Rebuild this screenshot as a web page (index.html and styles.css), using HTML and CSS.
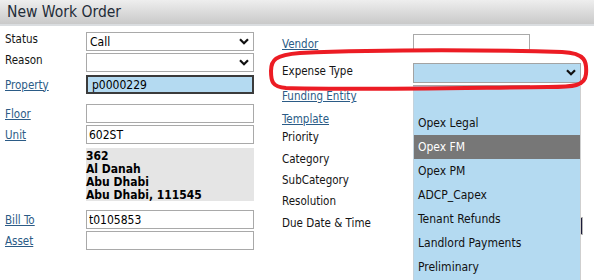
FILE: index.html
```html
<!DOCTYPE html>
<html lang="en">

<head>
    <meta charset="UTF-8" />
    <title>New Work Order</title>
    <link rel="stylesheet" href="styles.css">
</head>

<body>
    <div class="title-bar">
        <h1>New Work Order</h1>
    </div>

    <div class="form">
        <div class="col col-left">
            <div class="row r-status">
                <span class="lbl">Status</span>
                <div class="sel">
                    <select><option>Call</option></select>
                    <svg class="chev" viewBox="0 0 10 7"><path d="M1 1.2 L5 5.2 L9 1.2" /></svg>
                </div>
            </div>
            <div class="row r-reason">
                <span class="lbl">Reason</span>
                <div class="sel">
                    <select><option></option></select>
                    <svg class="chev" viewBox="0 0 10 7"><path d="M1 1.2 L5 5.2 L9 1.2" /></svg>
                </div>
            </div>
            <div class="row r-property">
                <a class="lbl link" href="#">Property</a>
                <input class="fld fld-focus" type="text" value="p0000229" />
            </div>
            <div class="row r-floor">
                <a class="lbl link" href="#">Floor</a>
                <input class="fld" type="text" value="" />
            </div>
            <div class="row r-unit">
                <a class="lbl link" href="#">Unit</a>
                <input class="fld" type="text" value="602ST" />
            </div>
            <div class="row r-address">
                <span class="lbl"></span>
                <div class="address">
                    362<br>Al Danah<br>Abu Dhabi<br>Abu Dhabi, 111545
                </div>
            </div>
            <div class="row r-bill">
                <a class="lbl link" href="#">Bill To</a>
                <input class="fld" type="text" value="t0105853" />
            </div>
            <div class="row r-asset">
                <a class="lbl link" href="#">Asset</a>
                <input class="fld" type="text" value="" />
            </div>
        </div>

        <div class="col col-right">
            <div class="rrow r-vendor">
                <a class="lbl link" href="#">Vendor</a>
                <input class="fld fld-short" type="text" value="" />
            </div>
            <div class="rrow r-expense">
                <span class="lbl">Expense Type</span>
                <div class="sel sel-open">
                    <select><option></option></select>
                    <svg class="chev" viewBox="0 0 10 7"><path d="M1 1.2 L5 5.2 L9 1.2" /></svg>
                    <ul class="dropdown">
                        <li class="blank"></li>
                        <li>Opex Legal</li>
                        <li class="active">Opex FM</li>
                        <li>Opex PM</li>
                        <li>ADCP_Capex</li>
                        <li>Tenant Refunds</li>
                        <li>Landlord Payments</li>
                        <li>Preliminary</li>
                    </ul>
                </div>
            </div>
            <div class="rrow r-funding">
                <a class="lbl link" href="#">Funding Entity</a>
                <input class="fld fld-short" type="text" value="" />
            </div>
            <div class="rrow r-template">
                <a class="lbl link" href="#">Template</a>
            </div>
            <div class="rrow r-priority">
                <span class="lbl">Priority</span>
            </div>
            <div class="rrow">
                <span class="lbl">Category</span>
            </div>
            <div class="rrow">
                <span class="lbl">SubCategory</span>
            </div>
            <div class="rrow">
                <span class="lbl">Resolution</span>
            </div>
            <div class="rrow r-due">
                <span class="lbl">Due Date &amp; Time</span>
                <div class="due-fld"></div>
            </div>
        </div>
    </div>

    <!-- hand drawn highlight around the expense type row -->
    <svg class="ring" width="594" height="280" viewBox="0 0 594 280">
        <path d="M300 53 C 390 49, 500 50, 562 52 C 586 53, 587 62, 586 74 C 585 86, 574 87, 548 87
                 C 450 88, 340 90, 286 88 C 272 87, 271 81, 271 71 C 271 60, 275 55, 300 53" />
    </svg>
</body>

</html>
```

FILE: styles.css
```css
:root {
    --link-color: #2b5b86;
    --text-color: #141414;
    --field-border: #a9a9a9;
    --pick-bg: #b4daf1;
    --font: "DejaVu Sans Condensed", "DejaVu Sans", sans-serif;
}

* {
    box-sizing: border-box;
}

html,
body {
    height: 100%;
}

body {
    position: relative;
    margin: 0;
    padding: 0;
    min-height: 280px;
    font-family: var(--font);
    font-size: 11.5px;
    color: var(--text-color);
    background: #fff;
    overflow: hidden;
}

.title-bar {
    height: 26px;
    background: linear-gradient(#eeeeee, #c9c9c9);
    border-bottom: 2px solid #dadde0;
}

.title-bar h1 {
    margin: 0;
    padding-left: 7px;
    font-size: 15.5px;
    font-weight: normal;
    line-height: 24px;
    color: #1f2c38;
}

.form {
    display: flex;
    gap: 28px;
    padding-left: 5px;
}

.col-left {
    display: flex;
    flex-direction: column;
    width: 249px;
    padding-top: 6px;
}

.col-right {
    display: flex;
    flex-direction: column;
    padding-top: 8px;
}

.row {
    display: flex;
    align-items: center;
}

.lbl {
    flex: 0 0 auto;
    color: var(--text-color);
}

.row .lbl {
    width: 81px;
}

.rrow {
    display: flex;
    align-items: flex-start;
    height: 21px;
}

.rrow .lbl {
    width: 131px;
    padding-top: 2px;
}

.link {
    color: var(--link-color);
    text-decoration: underline;
}

/* left column spacing */
.r-status .lbl,
.r-reason .lbl {
    align-self: flex-start;
    padding-top: 0;
}

.r-reason { margin-top: 2px; }
.r-property { margin-top: 3px; }
.r-floor { margin-top: 10px; }
.r-unit { margin-top: 2px; }
.r-address { margin-top: 4px; align-items: flex-start; }
.r-bill { margin-top: 9px; }
.r-asset { margin-top: 2px; }

/* fields */
.fld {
    width: 168px;
    height: 19px;
    margin: 0;
    padding: 0 2px;
    font-family: var(--font);
    font-size: 12px;
    color: #000;
    background: #fff;
    border: 1px solid var(--field-border);
    border-radius: 0;
    outline: none;
}

.fld-focus {
    background: var(--pick-bg);
    border: 2px solid #3b3b3b;
    padding-left: 4px;
}

.fld-short {
    width: 117px;
    height: 17px;
}

.sel {
    position: relative;
    width: 168px;
    height: 19px;
}

.sel select {
    width: 100%;
    height: 100%;
    margin: 0;
    padding: 0 0 0 3px;
    font-family: var(--font);
    font-size: 12px;
    color: #000;
    background: #fff;
    border: 1px solid var(--field-border);
    border-radius: 0;
    appearance: none;
    -webkit-appearance: none;
    outline: none;
}

.chev {
    position: absolute;
    right: 5px;
    top: 6px;
    width: 10px;
    height: 7px;
    pointer-events: none;
}

.chev path {
    fill: none;
    stroke: #111;
    stroke-width: 2.2;
}

.address {
    width: 168px;
    height: 53px;
    padding-top: 2px;
    background: #e5e5e5;
    font-size: 12px;
    font-weight: bold;
    line-height: 13px;
    color: #000;
}

/* right column spacing */
.r-vendor { height: 29px; }
.r-vendor .lbl { padding-top: 3px; }

.r-expense { height: 22px; }
.r-expense .lbl { padding-top: 1px; }

.r-funding { height: 22px; }
.r-funding .lbl { padding-top: 4px; }
.r-funding .fld { height: 19px; }

.r-template { height: 22px; }
.r-template .lbl { padding-top: 5px; }

.r-priority .lbl { padding-top: 1px; }

.r-due { height: 26px; }
.r-due .lbl { padding-top: 3px; }

.sel-open {
    z-index: 2;
    height: 20px;
}

.sel-open select {
    background: var(--pick-bg);
    border-color: #a3a3a3;
}

.dropdown {
    position: absolute;
    top: 23px;
    left: 0;
    width: 168px;
    height: 194px;
    margin: 0;
    padding: 0;
    list-style: none;
    overflow: hidden;
    background: var(--pick-bg);
    border-left: 1px solid #c3d2dc;
    border-right: 1px solid #cfcfcf;
    font-size: 12px;
    color: #111;
}

.dropdown li {
    height: 24px;
    padding-left: 4px;
    line-height: 24px;
    white-space: nowrap;
}

.dropdown li.blank {
    height: 25px;
}

.dropdown li.active {
    background: #777777;
    color: #fff;
}

.due-fld {
    width: 170px;
    height: 18px;
    margin-top: 4px;
    border: 1px solid #b5b5b5;
    box-shadow: inset -2px 0 0 #1b1b3a;
}

.ring {
    position: absolute;
    top: 0;
    left: 0;
    pointer-events: none;
    z-index: 5;
}

.ring path {
    fill: none;
    stroke: #ec1c24;
    stroke-width: 4;
    stroke-linecap: round;
    stroke-linejoin: round;
}
```
